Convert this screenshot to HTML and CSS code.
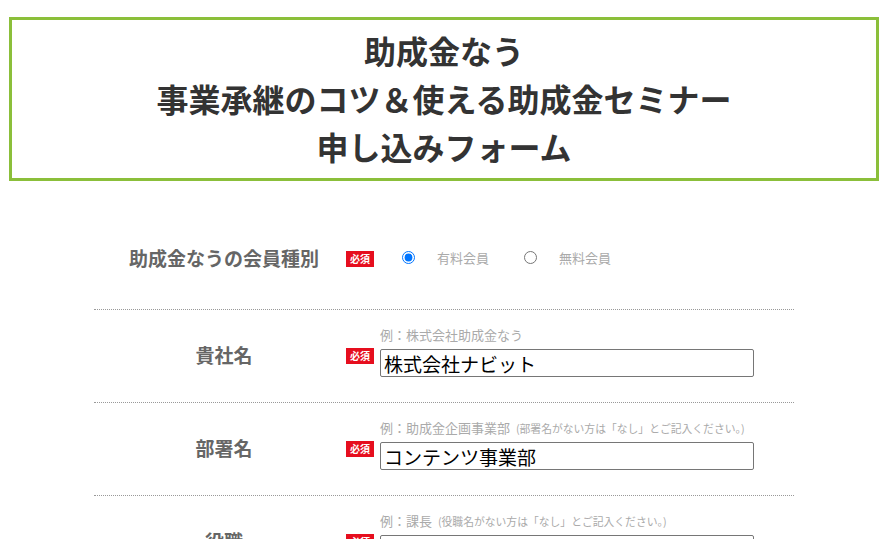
FILE: index.html
```html
<!DOCTYPE html>
<html lang="ja">
<head>
    <meta charset="UTF-8">
    <meta name="viewport" content="width=device-width, initial-scale=1.0">
    <title>事業承継のコツ＆使える助成金セミナー 申し込みフォーム</title>
    <link rel="stylesheet" href="styles.css">
</head>
<body>
    <div class="wrap">
        <h1 class="title">助成金なう<br>事業承継のコツ＆使える助成金セミナー<br>申し込みフォーム</h1>

        <form class="entry-form">
            <div class="row row-first">
                <div class="row-label">助成金なうの会員種別</div>
                <span class="req">必須</span>
                <div class="radios">
                    <label class="radio"><input type="radio" name="member" checked> 有料会員</label>
                    <label class="radio"><input type="radio" name="member"> 無料会員</label>
                </div>
            </div>

            <div class="row">
                <div class="row-label">貴社名</div>
                <span class="req">必須</span>
                <div class="field">
                    <p class="example">例：株式会社助成金なう</p>
                    <input type="text" class="text-input" value="株式会社ナビット">
                </div>
            </div>

            <div class="row">
                <div class="row-label">部署名</div>
                <span class="req">必須</span>
                <div class="field">
                    <p class="example">例：助成金企画事業部 <small>(部署名がない方は「なし」とご記入ください。)</small></p>
                    <input type="text" class="text-input" value="コンテンツ事業部">
                </div>
            </div>

            <div class="row">
                <div class="row-label">役職</div>
                <span class="req">必須</span>
                <div class="field">
                    <p class="example">例：課長 <small>(役職名がない方は「なし」とご記入ください。)</small></p>
                    <input type="text" class="text-input" value="">
                </div>
            </div>
        </form>
    </div>
</body>
</html>
```

FILE: styles.css
```css
body {
    margin: 0;
    font-family: "Noto Sans CJK JP", "Noto Sans", sans-serif;
    background-color: #fff;
    color: #333;
}

.wrap {
    width: 870px;
    margin: 17px 0 0 9px;
}

.title {
    margin: 0;
    padding: 6px 0 8px;
    border: 3px solid #8bbf3a;
    text-align: center;
    font-size: 32px;
    line-height: 48px;
    font-weight: bold;
    color: #333;
}

.entry-form {
    width: 700px;
    margin: 28px auto 0;
}

.row {
    display: grid;
    grid-template-columns: 252px 28px 380px;
    align-items: center;
    min-height: 92px;
    border-bottom: 1px dotted #999;
}

.row-first {
    min-height: 100px;
}

.row-label {
    padding-left: 8px;
    margin-top: -3px;
    text-align: center;
    font-size: 19px;
    font-weight: bold;
    color: #666;
}

.req {
    display: block;
    height: 16px;
    background-color: #e60e1e;
    color: #fff;
    font-size: 10px;
    font-weight: bold;
    line-height: 16px;
    text-align: center;
}

.radios {
    display: flex;
    align-items: center;
    padding-left: 28px;
    margin-top: -3px;
}

.radio {
    display: flex;
    align-items: center;
    font-size: 13px;
    color: #aaa;
    margin-right: 35px;
}

.radio input {
    width: 13px;
    height: 13px;
    margin: 0 22px 0 0;
}

.field {
    align-self: start;
    margin: 16px 0 0 6px;
}

.example {
    margin: 0 0 5px;
    font-size: 13px;
    line-height: 18px;
    color: #aaa;
}

.example small {
    font-size: 10.8px;
    margin-left: 3px;
}

.text-input {
    display: block;
    width: 100%;
    height: 28px;
    box-sizing: border-box;
    padding: 0 3px;
    border: 1px solid #767676;
    border-radius: 2px;
    font-family: "Noto Sans CJK JP", sans-serif;
    font-size: 19px;
    color: #000;
}
```
